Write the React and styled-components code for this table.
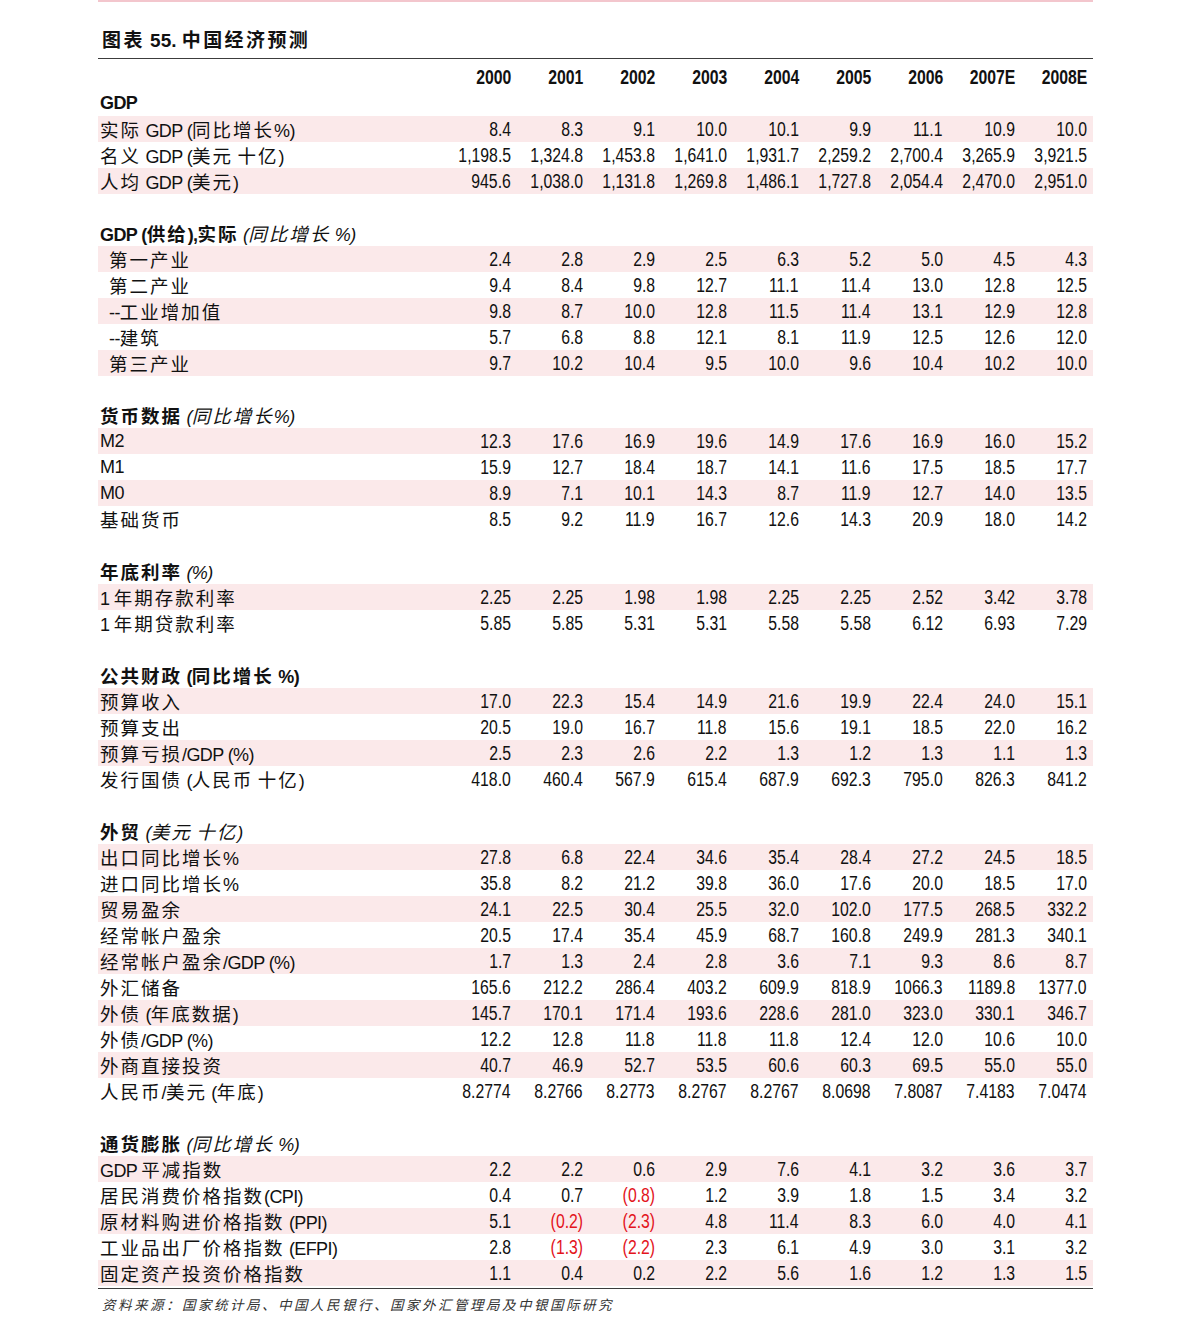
import styled, { createGlobalStyle } from "styled-components";

const GlobalStyle = createGlobalStyle`
  body {
    margin: 0;
    background: #fff;
    color: #111;
    font-family: "Liberation Sans", "Noto Sans CJK SC", sans-serif;
  }
`

const YEARS = ["2000", "2001", "2002", "2003", "2004", "2005", "2006", "2007E", "2008E"]

const SECTIONS = [
  {
    title: [{ b: "GDP" }],
    rows: [
      ["实际 GDP (同比增长%)", "8.4", "8.3", "9.1", "10.0", "10.1", "9.9", "11.1", "10.9", "10.0"],
      ["名义 GDP (美元 十亿)", "1,198.5", "1,324.8", "1,453.8", "1,641.0", "1,931.7", "2,259.2", "2,700.4", "3,265.9", "3,921.5"],
      ["人均 GDP (美元)", "945.6", "1,038.0", "1,131.8", "1,269.8", "1,486.1", "1,727.8", "2,054.4", "2,470.0", "2,951.0"],
    ],
  },
  {
    title: [{ b: "GDP (供给),实际 " }, { i: "(同比增长 %)" }],
    indent: true,
    rows: [
      ["第一产业", "2.4", "2.8", "2.9", "2.5", "6.3", "5.2", "5.0", "4.5", "4.3"],
      ["第二产业", "9.4", "8.4", "9.8", "12.7", "11.1", "11.4", "13.0", "12.8", "12.5"],
      ["--工业增加值", "9.8", "8.7", "10.0", "12.8", "11.5", "11.4", "13.1", "12.9", "12.8"],
      ["--建筑", "5.7", "6.8", "8.8", "12.1", "8.1", "11.9", "12.5", "12.6", "12.0"],
      ["第三产业", "9.7", "10.2", "10.4", "9.5", "10.0", "9.6", "10.4", "10.2", "10.0"],
    ],
  },
  {
    title: [{ b: "货币数据 " }, { i: "(同比增长%)" }],
    rows: [
      ["M2", "12.3", "17.6", "16.9", "19.6", "14.9", "17.6", "16.9", "16.0", "15.2"],
      ["M1", "15.9", "12.7", "18.4", "18.7", "14.1", "11.6", "17.5", "18.5", "17.7"],
      ["M0", "8.9", "7.1", "10.1", "14.3", "8.7", "11.9", "12.7", "14.0", "13.5"],
      ["基础货币", "8.5", "9.2", "11.9", "16.7", "12.6", "14.3", "20.9", "18.0", "14.2"],
    ],
  },
  {
    title: [{ b: "年底利率 " }, { i: "(%)" }],
    rows: [
      ["1 年期存款利率", "2.25", "2.25", "1.98", "1.98", "2.25", "2.25", "2.52", "3.42", "3.78"],
      ["1 年期贷款利率", "5.85", "5.85", "5.31", "5.31", "5.58", "5.58", "6.12", "6.93", "7.29"],
    ],
  },
  {
    title: [{ b: "公共财政 (同比增长 %)" }],
    rows: [
      ["预算收入", "17.0", "22.3", "15.4", "14.9", "21.6", "19.9", "22.4", "24.0", "15.1"],
      ["预算支出", "20.5", "19.0", "16.7", "11.8", "15.6", "19.1", "18.5", "22.0", "16.2"],
      ["预算亏损/GDP (%)", "2.5", "2.3", "2.6", "2.2", "1.3", "1.2", "1.3", "1.1", "1.3"],
      ["发行国债 (人民币 十亿)", "418.0", "460.4", "567.9", "615.4", "687.9", "692.3", "795.0", "826.3", "841.2"],
    ],
  },
  {
    title: [{ b: "外贸 " }, { i: "(美元 十亿)" }],
    rows: [
      ["出口同比增长%", "27.8", "6.8", "22.4", "34.6", "35.4", "28.4", "27.2", "24.5", "18.5"],
      ["进口同比增长%", "35.8", "8.2", "21.2", "39.8", "36.0", "17.6", "20.0", "18.5", "17.0"],
      ["贸易盈余", "24.1", "22.5", "30.4", "25.5", "32.0", "102.0", "177.5", "268.5", "332.2"],
      ["经常帐户盈余", "20.5", "17.4", "35.4", "45.9", "68.7", "160.8", "249.9", "281.3", "340.1"],
      ["经常帐户盈余/GDP (%)", "1.7", "1.3", "2.4", "2.8", "3.6", "7.1", "9.3", "8.6", "8.7"],
      ["外汇储备", "165.6", "212.2", "286.4", "403.2", "609.9", "818.9", "1066.3", "1189.8", "1377.0"],
      ["外债 (年底数据)", "145.7", "170.1", "171.4", "193.6", "228.6", "281.0", "323.0", "330.1", "346.7"],
      ["外债/GDP (%)", "12.2", "12.8", "11.8", "11.8", "11.8", "12.4", "12.0", "10.6", "10.0"],
      ["外商直接投资", "40.7", "46.9", "52.7", "53.5", "60.6", "60.3", "69.5", "55.0", "55.0"],
      ["人民币/美元 (年底)", "8.2774", "8.2766", "8.2773", "8.2767", "8.2767", "8.0698", "7.8087", "7.4183", "7.0474"],
    ],
  },
  {
    title: [{ b: "通货膨胀 " }, { i: "(同比增长 %)" }],
    rows: [
      ["GDP 平减指数", "2.2", "2.2", "0.6", "2.9", "7.6", "4.1", "3.2", "3.6", "3.7"],
      ["居民消费价格指数(CPI)", "0.4", "0.7", "(0.8)", "1.2", "3.9", "1.8", "1.5", "3.4", "3.2"],
      ["原材料购进价格指数 (PPI)", "5.1", "(0.2)", "(2.3)", "4.8", "11.4", "8.3", "6.0", "4.0", "4.1"],
      ["工业品出厂价格指数 (EFPI)", "2.8", "(1.3)", "(2.2)", "2.3", "6.1", "4.9", "3.0", "3.1", "3.2"],
      ["固定资产投资价格指数", "1.1", "0.4", "0.2", "2.2", "5.6", "1.6", "1.2", "1.3", "1.5"],
    ],
  },
]

const Page = styled.div`
  margin: 0 98px;
  padding-bottom: 20px;
`

const TopLine = styled.div`
  height: 2px;
  background: #f3c6cd;
`

const Title = styled.h1`
  margin: 27px 0 0;
  padding: 0 0 5px 4px;
  font-family: "Liberation Sans", "Noto Sans CJK SC", sans-serif;
  font-size: 19px;
  line-height: 24px;
  font-weight: bold;
  border-bottom: 1.5px solid #3c3c3c;
`

const TitleCjk = styled.span`
  letter-spacing: 2.4px;
`

const Table = styled.div`
  padding-top: 5px;
  border-bottom: 1.5px solid #3c3c3c;
  padding-bottom: 2px;
`

const Row = styled.div`
  display: grid;
  grid-template-columns: 1fr repeat(9, 72px);
  height: 26px;
  align-items: center;
  background: ${p => (p.$shaded ? "#fbe9ea" : "transparent")};
  font-size: 18.5px;
`

const Label = styled.div`
  padding-left: ${p => (p.$indent ? 11 : 2)}px;
  white-space: nowrap;
  font-weight: ${p => (p.$bold ? "bold" : "normal")};
`

const Cjk = styled.span`
  letter-spacing: 2px;
`

const Latin = styled.span`
  letter-spacing: -0.6px;
  font-size: 18px;
`

const Num = styled.div`
  text-align: right;
  padding-right: 6px;
  white-space: nowrap;
  color: ${p => (p.$neg ? "#e3141c" : "#111")};
  font-weight: ${p => (p.$bold ? "bold" : "normal")};
`

// condensed digits: squeeze towards the right edge so alignment stays
const Digits = styled.span`
  display: inline-block;
  font-size: 19.5px;
  transform: scaleX(0.81);
  transform-origin: right center;
`

const Italic = styled.span`
  font-style: italic;
  font-weight: normal;
`

const Spacer = styled.div`
  height: 26px;
`

const Source = styled.div`
  margin-top: 6px;
  padding-left: 4px;
  font-family: "Noto Sans CJK SC", sans-serif;
  font-size: 13.5px;
  line-height: 18px;
  letter-spacing: 2.5px;
  font-style: italic;
  color: #333;
`

const CJK_RE = /([\u3000-\u9fff\uff00-\uffef]+)/

function Text({ children }) {
  return children
    .split(CJK_RE)
    .filter(Boolean)
    .map((part, i) => (CJK_RE.test(part) ? <Cjk key={i}>{part}</Cjk> : <Latin key={i}>{part}</Latin>))
}

function Section({ section, first }) {
  return (
    <>
      {!first && <Spacer />}
      <Row>
        <Label $bold>
          {section.title.map((t, i) =>
            t.i ? (
              <Italic key={i}>
                <Text>{t.i}</Text>
              </Italic>
            ) : (
              <Text key={i}>{t.b}</Text>
            )
          )}
        </Label>
      </Row>
      {section.rows.map((r, i) => (
        <Row key={r[0]} $shaded={i % 2 === 0}>
          <Label $indent={section.indent}>
            <Text>{r[0]}</Text>
          </Label>
          {r.slice(1).map((v, j) => (
            <Num key={j} $neg={v.startsWith("(")}>
              <Digits>{v}</Digits>
            </Num>
          ))}
        </Row>
      ))}
    </>
  )
}

function App() {
  return (
    <Page>
      <GlobalStyle />
      <TopLine />
      <Title>
        <TitleCjk>图表</TitleCjk> 55. <TitleCjk>中国经济预测</TitleCjk>
      </Title>
      <Table>
        <Row>
          <Label />
          {YEARS.map(y => (
            <Num key={y} $bold>
              <Digits>{y}</Digits>
            </Num>
          ))}
        </Row>
        {SECTIONS.map((s, i) => (
          <Section key={i} section={s} first={i === 0} />
        ))}
      </Table>
      <Source>资料来源：国家统计局、中国人民银行、国家外汇管理局及中银国际研究</Source>
    </Page>
  )
}

export default App
